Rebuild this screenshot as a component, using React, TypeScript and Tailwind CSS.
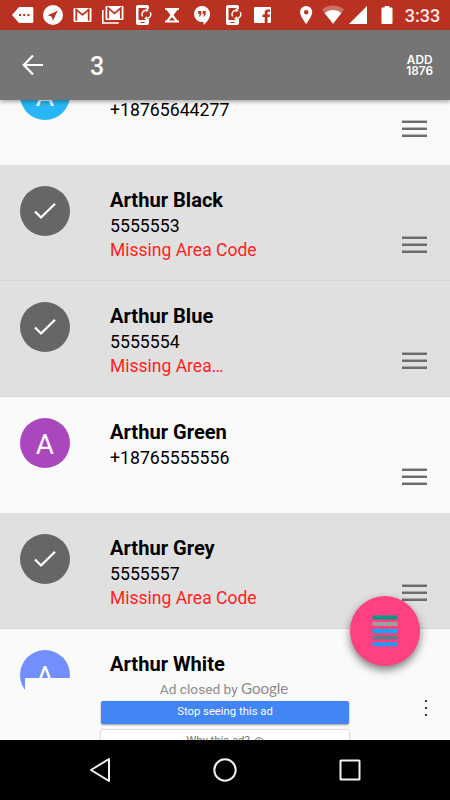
import React from "react";

type Contact = {
  name: string;
  phone: string;
  note?: string;
  selected?: boolean;
  avatar?: string;
};

const contacts: Contact[] = [
  { name: "Arthur", phone: "+18765644277", avatar: "bg-[#29b6f6]" },
  { name: "Arthur Black", phone: "5555553", note: "Missing Area Code", selected: true },
  { name: "Arthur Blue", phone: "5555554", note: "Missing Area…", selected: true },
  { name: "Arthur Green", phone: "+18765555556", avatar: "bg-[#ab47bc]" },
  { name: "Arthur Grey", phone: "5555557", note: "Missing Area Code", selected: true },
  { name: "Arthur White", phone: "", avatar: "bg-[#738ffe]" },
];

function Glyph({ box, className, children }: { box: string; className: string; children: React.ReactNode }) {
  return (
    <svg viewBox={box} className={`h-[30px] shrink-0 ${className}`} fill="white">
      {children}
    </svg>
  );
}

function PhoneSync() {
  return (
    <>
      <path d="M2 5h9a2 2 0 0 1 2 2v2h-2V8H2.500v12H11v-1h2v4a2 2 0 0 1-2 2H2a2 2 0 0 1-2-2V7a2 2 0 0 1 2-2Z" />
      <path d="M4.500 22.500h4" stroke="#b93221" strokeWidth="1" />
      <g fill="none" stroke="white" strokeWidth="1.400">
        <path d="M6.700 16.500a4 4 0 0 1 3.600-6.200M14.100 12.200a4 4 0 0 1-3.600 6.200" />
      </g>
      <path d="m9.800 8 3 2.300-3 2.300ZM11 16.200v4.400l-3-2.200Z" />
    </>
  );
}

function StatusBar() {
  return (
    <header className="flex h-[30px] shrink-0 items-center bg-[#b93221] pl-3">
      <Glyph box="0 0 22 30" className="w-[22px]">
        <path d="M7 7h13a1.300 1.300 0 0 1 1.300 1.300v13.400A1.300 1.300 0 0 1 20 23H7L0 15Z" />
        <path d="M7 14h2v2H7Zm4.200 0h2v2h-2Zm4.200 0h2v2h-2Z" fill="#b93221" />
      </Glyph>
      <Glyph box="0 0 20 30" className="ml-[8.500px] w-5">
        <circle cx="10" cy="15" r="10" />
        <path d="m14.500 11-10 4.300 4.100 1.300 1.400 3.900Z" fill="#b93221" />
        <path d="m14.500 11-5.900 5.600" stroke="#b93221" />
      </Glyph>
      <Glyph box="0 0 19 30" className="ml-[10.500px] w-[19px]">
        <rect x=".5" y="8" width="18" height="14" rx="1.300" />
        <path d="M3.300 20.700v-11L9.500 15l6.200-5.300v11" fill="none" stroke="#b93221" strokeWidth="1.700" />
      </Glyph>
      <Glyph box="0 0 22 30" className="ml-[9.500px] w-[22px]">
        <path d="M.8 10v13h16" fill="none" stroke="white" strokeWidth="1.600" />
        <rect x="3.500" y="6" width="18" height="14" rx="1.300" />
        <path d="M6.200 18.600V8l6.300 5.300L18.800 8v10.600" fill="none" stroke="#b93221" strokeWidth="1.700" />
      </Glyph>
      <Glyph box="0 0 16 30" className="ml-[12px] w-4">
        <PhoneSync />
      </Glyph>
      <Glyph box="0 0 14 30" className="ml-[13.500px] w-[14px]">
        <path d="M0 8h14v2h-1.500L8.500 15l4 5.500H14v2H0v-2h1.500L5.500 15l-4-5H0Z" />
        <path d="M4 20.500 7 17l3 3.500Z" fill="#b93221" />
      </Glyph>
      <Glyph box="0 0 16 30" className="ml-[14.500px] w-4">
        <path d="M8 6a8 8 0 0 1 8 8c0 4.500-3 8-6.500 11v-3H8A8 8 0 0 1 8 6Z" />
        <path d="M4.300 11h3v3L6 16.500H5l.7-2.500H4.300Zm4.400 0h3v3l-1.300 2.500h-1l.7-2.500H8.700Z" fill="#b93221" />
      </Glyph>
      <Glyph box="0 0 16 30" className="ml-[16.500px] w-4">
        <PhoneSync />
      </Glyph>
      <Glyph box="0 0 17 30" className="ml-[12px] w-[17px]">
        <path d="M1 7h15a1 1 0 0 1 1 1v14a1 1 0 0 1-1 1h-2.500v-6h2.200l.3-2.500h-2.500V13c0-.8.4-1.300 1.300-1.300H16V9.500h-2.200c-2 0-3.100 1.200-3.100 3v2H8.500V17h2.200v6H1a1 1 0 0 1-1-1V8a1 1 0 0 1 1-1Z" />
      </Glyph>
      <Glyph box="0 0 13 30" className="ml-[29px] w-[13px]">
        <path fillRule="evenodd" d="M6.200 6a6 6 0 0 1 6 6.200C12.200 16 6.200 24 6.200 24S0 16 0 12.200A6 6 0 0 1 6.200 6Zm0 4a2.200 2.200 0 1 0 0 4.400 2.200 2.200 0 0 0 0-4.400Z" />
      </Glyph>
      <Glyph box="0 0 22 30" className="ml-[9.300px] w-[22px]">
        <path d="M0 9.500a17.500 17.500 0 0 1 22 0L11 23.700Z" opacity=".3" />
        <path d="M2.500 13a14 14 0 0 1 17 0L11 23.700Z" />
      </Glyph>
      <Glyph box="0 0 18 30" className="ml-[5px] w-[18px]">
        <path d="M18 6v18H0Z" />
      </Glyph>
      <Glyph box="0 0 12 30" className="ml-[13.500px] w-[12px]">
        <path d="M3.700 6h4.600v1.500h2.200a1 1 0 0 1 1 1V23a1 1 0 0 1-1 1h-9a1 1 0 0 1-1-1V8.500a1 1 0 0 1 1-1h2.200Z" />
      </Glyph>
      <span className="ml-[12px] pt-px text-[18px] leading-[30px] font-medium text-white/90">3:33</span>
    </header>
  );
}

function Toolbar() {
  return (
    <div className="relative z-10 flex h-[70px] shrink-0 items-center bg-[#757575] text-white shadow-[0_2px_4px_rgba(0,0,0,0.32)]">
      <svg viewBox="0 0 22 22" className="ml-[22px] h-[22px] w-[22px]" fill="none" stroke="white" strokeWidth="2.200">
        <path d="M21 11H2.500M11 1.500 1.800 11l9.200 9.500" />
      </svg>
      <span className="ml-[46px] pt-[2px] text-[25px] leading-none font-medium">3</span>
      <div className="mr-[17px] ml-auto pt-px text-center font-[Inter] text-[11.800px] leading-[11px] font-semibold">
        <div>ADD</div>
        <div>1876</div>
      </div>
    </div>
  );
}

function ContactRow({ contact }: { contact: Contact }) {
  return (
    <li
      className={`flex h-[116px] shrink-0 items-start border-b pl-5 ${
        contact.selected ? "border-[#d6d6d6] bg-[#e0e0e0]" : "border-[#f6f6f6] bg-[#fafafa]"
      }`}
    >
      {contact.selected ? (
        <div className="mt-[21px] flex h-[50px] w-[50px] items-center justify-center rounded-full bg-[#666666]">
          <svg viewBox="0 0 24 18" className="h-[18px] w-6" fill="none" stroke="white" strokeWidth="2.300">
            <path d="m2 9.500 6 6L22 1.800" />
          </svg>
        </div>
      ) : (
        <div className={`mt-[21px] flex h-[50px] w-[50px] items-center justify-center rounded-full pt-[3px] text-[28px] leading-none text-white ${contact.avatar}`}>
          A
        </div>
      )}
      <div className="ml-10 flex-1 pt-[23px] text-[17.700px] leading-6 whitespace-nowrap text-black">
        <div className="text-[20.100px] leading-[25px] font-bold">{contact.name}</div>
        <div className="leading-[26px]">{contact.phone}</div>
        {contact.note && <div className="text-[17.500px] leading-[22px] text-[#ff1f1f]">{contact.note}</div>}
      </div>
      <div className="mt-[72px] mr-[23px] flex w-[25px] flex-col gap-[5px]">
        <span className="h-[2px] bg-[#6c6c6c] shadow-[0_-1px_0_rgba(0,0,0,0.25)]" />
        <span className="h-[2px] bg-[#6c6c6c] shadow-[0_-1px_0_rgba(0,0,0,0.25)]" />
        <span className="h-[2px] bg-[#6c6c6c] shadow-[0_-1px_0_rgba(0,0,0,0.25)]" />
      </div>
    </li>
  );
}

function ClosedAd() {
  return (
    <aside className="absolute right-0 bottom-0 left-[25px] h-[62px] overflow-hidden bg-[#fafafa]">
      <div className="ml-[76px] flex w-[248px] flex-col">
        <div className="flex h-[23px] items-center justify-center pr-[2px] text-[13.700px] text-[#8c8c8c]">
          Ad closed by&nbsp;<span className="-mt-[2px] font-[Lato] text-[15.200px] tracking-[-0.100px]">Google</span>
        </div>
        <div className="h-[23px] rounded-[2px] bg-[#4285f4] text-center text-[11.300px] leading-[21px] text-white shadow-[0_1px_2px_rgba(0,0,0,0.4)]">
          Stop seeing this ad
        </div>
        <div className="mt-[6px] flex h-[23px] shrink-0 items-center justify-center gap-1 rounded-[2px] bg-white text-[11.300px] text-[#777] shadow-[0_0_2px_rgba(0,0,0,0.4)]">
          Why this ad?
          <svg viewBox="0 0 10 10" className="h-[10px] w-[10px]" fill="none" stroke="#777">
            <circle cx="5" cy="5" r="4.300" />
            <path d="M5 2v1M5 4v4" />
          </svg>
        </div>
      </div>
      <div className="absolute top-[22px] right-[23px] flex flex-col gap-[5px]">
        <span className="h-[2px] w-[2px] bg-[#333]" />
        <span className="h-[2px] w-[2px] bg-[#333]" />
        <span className="h-[2px] w-[2px] bg-[#333]" />
      </div>
    </aside>
  );
}

function SortButton() {
  return (
    <button className="absolute right-[30px] bottom-[74px] flex h-[70px] w-[70px] items-center justify-center rounded-full bg-[#ff4081] shadow-[0_4px_8px_rgba(0,0,0,0.5)]">
      <svg viewBox="0 0 26 32" className="h-8 w-[26px]">
        <path d="M.5.500h25v4H.5z" fill="#009688" />
        <path d="M.5 7h25v4H.5z" fill="#9e9e9e" />
        <path d="M.5 14h25v4H.5z" fill="#03a9f4" />
        <path d="M.5 20.600h25v4H.5z" fill="#607d8b" />
        <path d="M.5 27.300h25v4H.5z" fill="#2196f3" />
      </svg>
    </button>
  );
}

function NavBar() {
  return (
    <nav className="flex h-[60px] shrink-0 items-center justify-between bg-black px-[88px]">
      <svg viewBox="0 0 24 24" className="h-6 w-6" fill="none" stroke="#f2f2f2" strokeWidth="2" strokeLinejoin="round">
        <path d="M21 1v22L3 12Z" />
      </svg>
      <svg viewBox="0 0 24 24" className="h-6 w-6" fill="none" stroke="#f2f2f2" strokeWidth="2">
        <circle cx="12" cy="12" r="10.700" />
      </svg>
      <svg viewBox="0 0 24 24" className="h-6 w-6" fill="none" stroke="#f2f2f2" strokeWidth="2">
        <rect x="2.500" y="2.500" width="19" height="19" rx=".5" />
      </svg>
    </nav>
  );
}

export default function App() {
  return (
    <div className="flex h-[800px] w-[450px] flex-col overflow-hidden bg-[#fafafa] font-[Roboto,sans-serif]">
      <StatusBar />
      <Toolbar />
      <main className="relative h-[640px] flex-1 overflow-hidden">
        <ul className="-mt-[51px] flex flex-col">
          {contacts.map((contact) => (
            <ContactRow key={contact.name} contact={contact} />
          ))}
        </ul>
        <ClosedAd />
        <SortButton />
      </main>
      <NavBar />
    </div>
  );
}
